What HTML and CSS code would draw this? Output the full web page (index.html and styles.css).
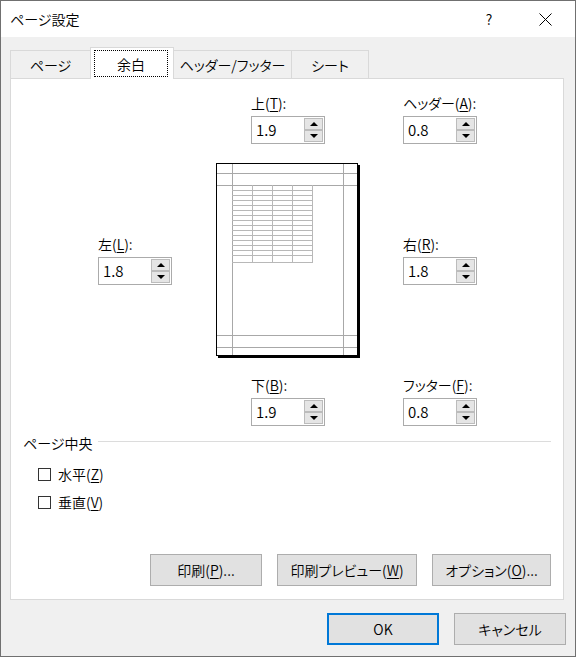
FILE: index.html
```html
<!doctype html>
<html lang="ja">
<head>
    <meta charset="UTF-8">
    <meta name="viewport" content="width=device-width, initial-scale=1.0">
    <title>ページ設定</title>

    <link rel="stylesheet" href="styles.css">
</head>
<body>
    <div id="dialog">
        <div class="titlebar">
            <span class="title">ページ設定</span>
            <span class="help">?</span>
            <span class="close">
                <svg width="13" height="13" viewBox="0 0 13 13">
                    <path d="M0.5 0.5 L12.5 12.5 M12.5 0.5 L0.5 12.5" stroke="#000" stroke-width="1" fill="none"/>
                </svg>
            </span>
        </div>

        <div class="content">
            <div class="tabs">
                <div class="tab tab-page">ページ</div>
                <div class="tab tab-margin active"><span class="focus">余白</span></div>
                <div class="tab tab-header">ヘッダー/フッター</div>
                <div class="tab tab-sheet">シート</div>
            </div>

            <div class="panel">
                <div class="margins">
                    <div class="field field-top">
                        <label>上(<u>T</u>):</label>
                        <div class="spin">
                            <span class="value">1.9</span>
                            <span class="arrows"><span class="arrow up"></span><span class="arrow down"></span></span>
                        </div>
                    </div>

                    <div class="field field-header">
                        <label>ヘッダー(<u>A</u>):</label>
                        <div class="spin">
                            <span class="value">0.8</span>
                            <span class="arrows"><span class="arrow up"></span><span class="arrow down"></span></span>
                        </div>
                    </div>

                    <div class="field field-left">
                        <label>左(<u>L</u>):</label>
                        <div class="spin">
                            <span class="value">1.8</span>
                            <span class="arrows"><span class="arrow up"></span><span class="arrow down"></span></span>
                        </div>
                    </div>

                    <div class="preview">
                        <svg width="144" height="195" viewBox="0 0 144 195">
                            <rect x="2" y="2" width="142" height="193" fill="#000"/>
                            <rect x="0.5" y="0.5" width="141" height="192" fill="#fff" stroke="#000"/>
                            <g stroke="#a8a8a8" stroke-width="1">
                                <path d="M16.5 1 V192 M127.5 1 V192"/>
                                <path d="M1 10.5 H141 M1 22.5 H141 M1 172.5 H141 M1 184.5 H141"/>
                            </g>
                            <g stroke="#b8b8b8" stroke-width="1">
                                <path d="M36.5 22 V100 M56.5 22 V100 M76.5 22 V100 M96.5 22 V100"/>
                                <path d="M16 27.5 H97 M16 32.5 H97 M16 37.5 H97 M16 42.5 H97 M16 47.5 H97
                                         M16 52.5 H97 M16 57.5 H97 M16 62.5 H97 M16 67.5 H97 M16 72.5 H97
                                         M16 77.5 H97 M16 82.5 H97 M16 87.5 H97 M16 92.5 H97 M16 99.5 H97"/>
                            </g>
                        </svg>
                    </div>

                    <div class="field field-right">
                        <label>右(<u>R</u>):</label>
                        <div class="spin">
                            <span class="value">1.8</span>
                            <span class="arrows"><span class="arrow up"></span><span class="arrow down"></span></span>
                        </div>
                    </div>

                    <div class="field field-bottom">
                        <label>下(<u>B</u>):</label>
                        <div class="spin">
                            <span class="value">1.9</span>
                            <span class="arrows"><span class="arrow up"></span><span class="arrow down"></span></span>
                        </div>
                    </div>

                    <div class="field field-footer">
                        <label>フッター(<u>F</u>):</label>
                        <div class="spin">
                            <span class="value">0.8</span>
                            <span class="arrows"><span class="arrow up"></span><span class="arrow down"></span></span>
                        </div>
                    </div>
                </div>

                <div class="group">
                    <div class="group-title"><span>ページ中央</span><span class="rule"></span></div>
                    <div class="check"><span class="box"></span>水平(<u>Z</u>)</div>
                    <div class="check"><span class="box"></span>垂直(<u>V</u>)</div>
                </div>

                <div class="actions">
                    <button class="btn btn-print">印刷(<u>P</u>)...</button>
                    <button class="btn btn-preview">印刷プレビュー(<u>W</u>)</button>
                    <button class="btn btn-options">オプション(<u>O</u>)...</button>
                </div>
            </div>

            <div class="footer">
                <button class="btn btn-ok">OK</button>
                <button class="btn btn-cancel">キャンセル</button>
            </div>
        </div>
    </div>
</body>
</html>
```

FILE: styles.css
```css
* {
    box-sizing: border-box;
}

html, body {
    margin: 0;
    background-color: #f0f0f0;
}

body {
    font-family: "Noto Sans CJK JP", "Noto Sans", sans-serif;
    font-feature-settings: "palt";
    font-size: 14px;
    font-weight: 350;
    line-height: 20px;
    color: #000;
}

u {
    text-decoration-thickness: 1px;
    text-underline-offset: 2px;
}

#dialog {
    width: 576px;
    height: 657px;
    border: 1px solid #707070;
    background-color: #f0f0f0;
    display: flex;
    flex-direction: column;
}

.titlebar {
    height: 36px;
    background-color: #fff;
    display: flex;
    align-items: center;
    padding-left: 9px;
}

.title {
    flex: 1;
}

.help {
    width: 46px;
    text-align: center;
    margin-right: 10px;
}

.close {
    width: 46px;
    margin-right: 7px;
    display: flex;
    justify-content: center;
}

.close svg {
    display: block;
}

.content {
    flex: 1;
    display: flex;
    flex-direction: column;
    padding: 0 11px 0 9px;
}

/* tabs */

.tabs {
    height: 41px;
    display: flex;
    align-items: flex-end;
}

.tab {
    height: 28px;
    border: 1px solid #d9d9d9;
    border-bottom: none;
    margin-right: -1px;
    display: flex;
    align-items: center;
    justify-content: center;
}

.tab-page   { width: 81px; }
.tab-margin { width: 84px; }
.tab-header { width: 119px; }
.tab-sheet  { width: 78px; }

.tab.active {
    height: 32px;
    margin-bottom: -1px;
    background-color: #fff;
    position: relative;
    z-index: 1;
    padding: 2px 5px 2px 3px;
    align-items: stretch;
}

.focus {
    flex: 1;
    border: 1px dotted #000;
    display: flex;
    align-items: center;
    justify-content: center;
}

/* panel */

.panel {
    height: 522px;
    border: 1px solid #d9d9d9;
    background-color: #fff;
    display: flex;
    flex-direction: column;
}

.margins {
    display: grid;
    grid-template-columns: 118px 187px 1fr;
    row-gap: 19px;
    padding: 14px 0 0 87px;
}

.field label {
    display: block;
    margin-bottom: 3px;
}

.field-top    { grid-column: 2; grid-row: 1; margin-left: 35px; }
.field-header { grid-column: 3; grid-row: 1; }
.field-left   { grid-column: 1; grid-row: 2; align-self: center; }
.preview      { grid-column: 2; grid-row: 2; margin-bottom: -2px; }
.field-right  { grid-column: 3; grid-row: 2; align-self: center; }
.field-bottom { grid-column: 2; grid-row: 3; margin-left: 35px; }
.field-footer { grid-column: 3; grid-row: 3; }

.preview svg {
    display: block;
}

.spin {
    width: 74px;
    height: 28px;
    border: 1px solid #ababab;
    padding: 1px;
    display: flex;
    font-size: 15px;
}

.spin .value {
    flex: 1;
    padding-left: 3px;
    display: flex;
    align-items: center;
}

.arrows {
    width: 19px;
    display: flex;
    flex-direction: column;
}

.arrow {
    flex: 1;
    background-color: #e5e5e5;
    border: 1px solid #bcbcbc;
    display: flex;
    align-items: center;
    justify-content: center;
}

.arrow::after {
    content: "";
    border-left: 4px solid transparent;
    border-right: 4px solid transparent;
}

.arrow.up::after {
    border-bottom: 4px solid #000;
}

.arrow.down::after {
    border-top: 4px solid #000;
}

/* page centring */

.group {
    margin-top: 7px;
    padding: 0 12px;
}

.group-title {
    display: flex;
}

.rule {
    flex: 1;
    height: 1px;
    margin: 8px 0 0 6px;
    background-color: #dcdcdc;
}

.check {
    height: 20px;
    margin: 8px 0 0 15px;
    display: flex;
    align-items: center;
}

.group-title + .check {
    margin-top: 11px;
}

.box {
    width: 13px;
    height: 13px;
    border: 1px solid #333;
    background-color: #fff;
    margin-right: 7px;
}

/* buttons */

.btn {
    height: 32px;
    padding: 0;
    font: inherit;
    font-feature-settings: "palt";
    color: #000;
    background-color: #e1e1e1;
    border: 1px solid #adadad;
}

.actions {
    margin-top: auto;
    padding: 0 12px 13px 0;
    display: flex;
    justify-content: flex-end;
    gap: 15px;
}

.btn-print   { width: 112px; }
.btn-preview { width: 140px; }
.btn-options { width: 119px; }

.footer {
    margin: 13px -2px 0 0;
    display: flex;
    justify-content: flex-end;
    gap: 15px;
}

.btn-ok,
.btn-cancel {
    width: 112px;
}

.btn-ok {
    border: 2px solid #0078d7;
}
```
